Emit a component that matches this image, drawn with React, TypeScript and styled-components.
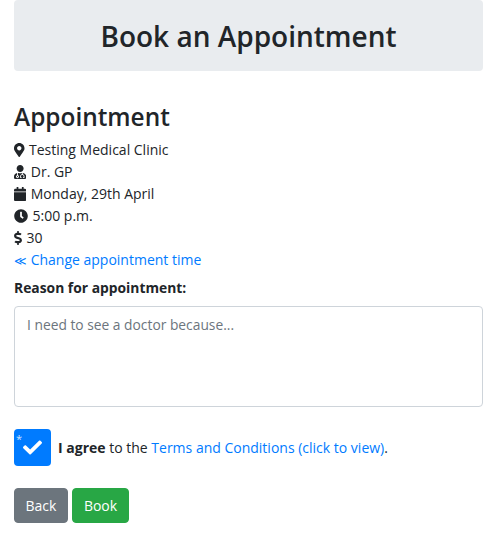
import React from 'react';
import styled, { createGlobalStyle } from 'styled-components';
import { FaMapMarkerAlt, FaUserMd, FaCalendar, FaClock, FaDollarSign, FaCheck } from 'react-icons/fa';

const Global = createGlobalStyle`
  html, body { margin: 0; padding: 0; background: #fff; }
  body {
    font-family: "Open Sans", "Noto Sans", sans-serif;
    font-size: 14px;
    line-height: 22px;
    color: #212529;
  }
`;

const Page = styled.div`
  padding: 0 17px 0 14px;
`;

const Banner = styled.div`
  height: 71px;
  box-sizing: border-box;
  padding-top: 3px;
  background: #e9ecef;
  border-radius: 4px;
  display: flex;
  align-items: center;
  justify-content: center;
  margin-bottom: 30px;
  h1 {
    margin: 0;
    font-size: 28px;
    font-weight: 600;
    line-height: 1.2;
  }
`;

const Title = styled.h2`
  margin: 0 0 6px;
  font-size: 24.4px;
  line-height: 32px;
  font-weight: 600;
`;

const Row = styled.div<{ $icon?: number }>`
  height: 22px;
  display: flex;
  align-items: center;
  gap: 4.5px;
  svg {
    height: 14px;
    width: ${p => p.$icon ?? 14}px;
    flex-shrink: 0;
    color: #212529;
  }
`;

const Link = styled.a`
  color: #007bff;
  text-decoration: none;
`;

const Chevrons = styled.span`
  font-size: 12px;
`;

const Label = styled.label`
  display: block;
  margin: 6px 0 7px;
  font-weight: 700;
  font-size: 13.85px;
`;

const Reason = styled.textarea`
  display: block;
  box-sizing: border-box;
  width: 100%;
  height: 101px;
  padding: 7px 12px 6px;
  border: 1px solid #ced4da;
  border-radius: 4px;
  font: inherit;
  font-size: 13.8px;
  color: #495057;
  resize: none;
  &::placeholder { color: #6c757d; opacity: 1; }
`;

const Agree = styled.div`
  display: flex;
  align-items: center;
  gap: 7px;
  margin: 22px 0 22px;
`;

const Check = styled.span`
  width: 37px;
  height: 37px;
  border-radius: 4px;
  background: #007bff;
  color: #fff;
  display: flex;
  align-items: center;
  justify-content: center;
  font-size: 19px;
  position: relative;
  &::before {
    content: '*';
    position: absolute;
    top: -1px;
    left: 2px;
    font-size: 11px;
    color: #cfe4ff;
  }
`;

const Buttons = styled.div`
  display: flex;
  gap: 4px;
`;

const Button = styled.button<{ $tone: string; $pad: number }>`
  height: 35px;
  padding: 0 ${p => p.$pad}px;
  border: 1px solid ${p => p.$tone};
  border-radius: 4px;
  background: ${p => p.$tone};
  color: #fff;
  font: inherit;
`;

export default function App() {
  return (
    <Page>
      <Global />
      <Banner><h1>Book an Appointment</h1></Banner>
      <Title>Appointment</Title>
      <Row $icon={10.5}><FaMapMarkerAlt />Testing Medical Clinic</Row>
      <Row $icon={12.25}><FaUserMd />Dr. GP</Row>
      <Row $icon={12.25}><FaCalendar />Monday, 29th April</Row>
      <Row><FaClock />5:00 p.m.</Row>
      <Row $icon={8}><FaDollarSign />30</Row>
      <Row><Link href="#"><Chevrons>≪</Chevrons> Change appointment time</Link></Row>
      <Label>Reason for appointment:</Label>
      <Reason placeholder="I need to see a doctor because..." />
      <Agree>
        <Check><FaCheck /></Check>
        <span><b>I agree</b> to the <Link href="#">Terms and Conditions (click to view)</Link>.</span>
      </Agree>
      <Buttons>
        <Button $tone="#6c757d" $pad={10.5}>Back</Button>
        <Button $tone="#28a745" $pad={11}>Book</Button>
      </Buttons>
    </Page>
  );
}
